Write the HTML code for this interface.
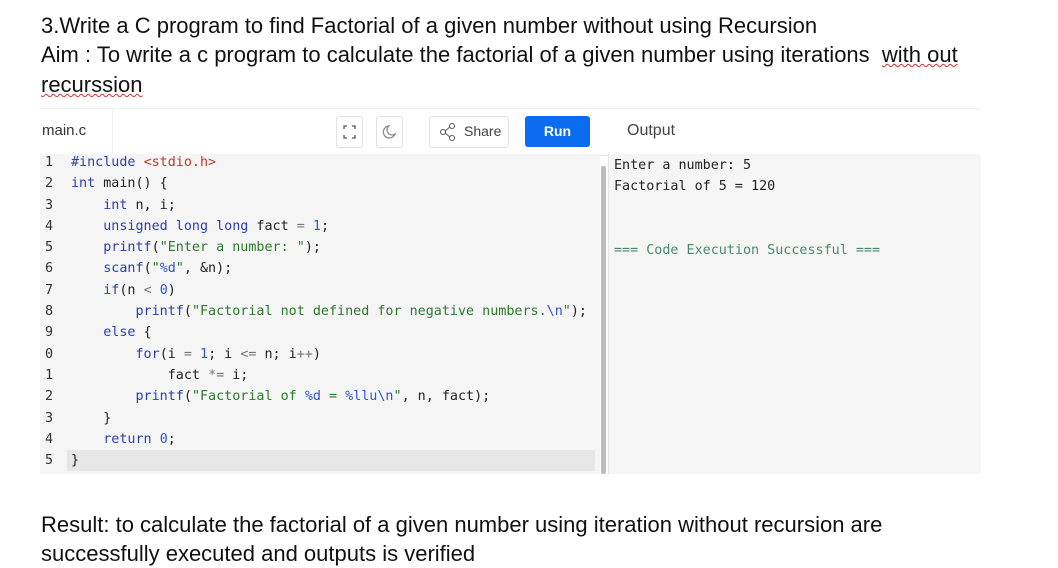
<!DOCTYPE html>
<html><head><style>
body{margin:0;width:1058px;height:568px;background:#fff;position:relative;overflow:hidden;font-family:"Liberation Sans",Arial,sans-serif;}
.t{position:absolute;left:41px;font-size:22px;color:#111;white-space:nowrap;}
.sq{text-decoration:underline wavy #c33;text-decoration-thickness:1px;}
.hdr{position:absolute;left:40px;top:108px;width:940px;height:46px;border-top:1px solid #eee;border-bottom:1px solid #e3e3e3;background:#fff;}
.ed{position:absolute;left:40px;top:154px;width:560px;height:320px;background:#f5f5f5;}
.sb{position:absolute;left:601px;top:166px;width:5px;height:308px;background:#bdbdbd;border-radius:2px;}
.out{position:absolute;left:608px;top:154px;width:372px;height:320px;background:#f5f5f5;border-left:1px solid #e6e6e6;}
.code{position:absolute;font-family:"DejaVu Sans Mono","Liberation Mono",monospace;font-size:13.4px;white-space:pre;line-height:21.3px;}
.ln{color:#333;}
.k{color:#2a3fb0}.s{color:#2b7a2b}.r{color:#c0392b}.n{color:#3355cc}.o{color:#777}
.btn{position:absolute;top:116px;height:30px;border:1px solid #e2e2e2;border-radius:3px;background:#fff;}
</style></head><body>
<div class="t" style="top:13px">3.Write a C program to find Factorial of a given number without using Recursion</div>
<div class="t" style="top:42px">Aim : To write a c program to calculate the factorial of a given number using iterations &nbsp;<span class="sq">with out</span></div>
<div class="t" style="top:72px"><span class="sq">recurssion</span></div>
<div class="hdr"></div>
<div style="position:absolute;left:40px;top:108px;width:72px;height:46px;border-right:1px solid #eee;"></div>
<div style="position:absolute;left:42px;top:122px;font-size:15px;color:#333">main.c</div>
<div class="btn" style="left:336px;width:25px"><svg width="25" height="30"><path d="M7 12v-3h3M15 9h3v3M18 18v3h-3M10 21h-3v-3" stroke="#555" fill="none" stroke-width="1.3"/></svg></div>
<div class="btn" style="left:376px;width:25px"><svg width="25" height="30"><path d="M12 9a6 6 0 1 0 6 8a5 5 0 0 1 -6 -8z" stroke="#888" fill="none" stroke-width="1.2"/></svg></div>
<div class="btn" style="left:429px;width:78px"><svg width="24" height="30" style="position:absolute;left:6px;top:0"><circle cx="7" cy="15" r="2.5" stroke="#555" fill="none"/><circle cx="16" cy="9" r="2.5" stroke="#555" fill="none"/><circle cx="16" cy="21" r="2.5" stroke="#555" fill="none"/><path d="M9 14l5-4M9 16l5 4" stroke="#555"/></svg><span style="position:absolute;left:34px;top:6px;font-size:14px;color:#444">Share</span></div>
<div style="position:absolute;left:525px;top:116px;width:65px;height:31px;background:#0b6cf2;border-radius:3px;color:#fff;font-weight:bold;font-size:14px;text-align:center;line-height:31px">Run</div>
<div style="position:absolute;left:627px;top:122px;font-size:16px;color:#444">Output</div>
<div class="ed"></div>
<div style="position:absolute;left:67px;top:450px;width:528px;height:21px;background:#e6e6e6"></div>
<div class="sb"></div>
<div class="out"></div>
<div class="code ln" style="left:45px;top:152px">1
2
3
4
5
6
7
8
9
0
1
2
3
4
5</div>
<div class="code" style="left:71px;top:152px;color:#222"><span class="k">#include</span> <span class="r">&lt;stdio.h&gt;</span>
<span class="k">int</span> main() {
    <span class="k">int</span> n, i;
    <span class="k">unsigned long long</span> fact <span class="o">=</span> <span class="n">1</span>;
    <span class="k">printf</span>(<span class="s">"Enter a number: "</span>);
    <span class="k">scanf</span>(<span class="s">"<span class="n">%d</span>"</span>, &amp;n);
    <span class="k">if</span>(n <span class="o">&lt;</span> <span class="n">0</span>)
        <span class="k">printf</span>(<span class="s">"Factorial not defined for negative numbers.<span class="n">\n</span>"</span>);
    <span class="k">else</span> {
        <span class="k">for</span>(i <span class="o">=</span> <span class="n">1</span>; i <span class="o">&lt;=</span> n; i<span class="o">++</span>)
            fact <span class="o">*=</span> i;
        <span class="k">printf</span>(<span class="s">"Factorial of <span class="n">%d</span> = <span class="n">%llu\n</span>"</span>, n, fact);
    }
    <span class="k">return</span> <span class="n">0</span>;
}</div>
<div class="code" style="left:614px;top:155px;color:#222">Enter a number: 5
Factorial of 5 = 120


<span style="color:#4a8a6a">=== Code Execution Successful ===</span></div>
<div class="t" style="top:512px">Result: to calculate the factorial of a given number using iteration without recursion are</div>
<div class="t" style="top:541px">successfully executed and outputs is verified</div>
</body></html>
